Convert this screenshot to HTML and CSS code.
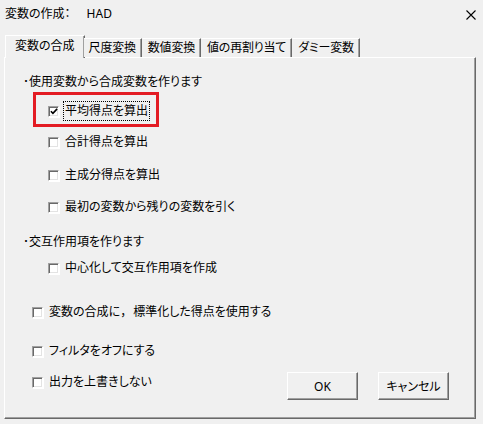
FILE: index.html
```html
<!DOCTYPE html>
<html lang="ja">
<head>
<meta charset="utf-8">
<title>変数の作成</title>
<link rel="stylesheet" href="styles.css">
</head>
<body>
<div class="window">
  <div class="titlebar">
    <span class="title">変数の作成：<span class="title-name">HAD</span></span>
    <svg class="close" width="10" height="10" viewBox="0 0 10 10"><path d="M0.5 0.5 L9.5 9.5 M9.5 0.5 L0.5 9.5" stroke="#000" stroke-width="1.1" fill="none"/></svg>
  </div>
  <div class="tabs">
    <div class="tab active">変数の合成</div>
    <div class="tab">尺度変換</div>
    <div class="tab">数値変換</div>
    <div class="tab">値の再割り当て</div>
    <div class="tab">ダミー変数</div>
  </div>
  <div class="panel">
    <div class="heading h1">･使用変数から合成変数を作ります</div>
    <div class="highlight">
      <div class="row">
        <span class="cb checked"><svg width="9" height="9" viewBox="0 0 9 9"><path d="M1 4.2 L3.3 6.6 L8 1.6" stroke="#000" stroke-width="1.8" fill="none"/></svg></span>
        <span class="label focus">平均得点を算出</span>
      </div>
    </div>
    <div class="row lv2 r2"><span class="cb"></span><span class="label">合計得点を算出</span></div>
    <div class="row lv2 r3"><span class="cb"></span><span class="label">主成分得点を算出</span></div>
    <div class="row lv2 r4"><span class="cb"></span><span class="label">最初の変数から残りの変数を引く</span></div>
    <div class="heading h2">･交互作用項を作ります</div>
    <div class="row lv2 r5"><span class="cb"></span><span class="label">中心化して交互作用項を作成</span></div>
    <div class="row lv1 r6"><span class="cb"></span><span class="label">変数の合成に<span class="fw">，</span>標準化した得点を使用する</span></div>
    <div class="row lv1 r7"><span class="cb"></span><span class="label">フィルタをオフにする</span></div>
    <div class="bottom">
      <div class="row lv1"><span class="cb"></span><span class="label">出力を上書きしない</span></div>
      <div class="buttons">
        <button class="btn">OK</button>
        <button class="btn">キャンセル</button>
      </div>
    </div>
  </div>
</div>
</body>
</html>
```
FILE: styles.css
```css
* { box-sizing: border-box; }
html, body { margin: 0; padding: 0; }
body {
  background: #f0f0f0;
  font-family: "Noto Sans", "Noto Sans CJK JP", sans-serif;
  font-size: 12px;
  color: #000;
  font-feature-settings: "palt";
  width: 483px;
  height: 424px;
  overflow: hidden;
}
.window { width: 483px; height: 424px; display: flex; flex-direction: column; }
.titlebar {
  height: 27px;
  display: flex;
  align-items: center;
  justify-content: space-between;
  padding: 0 7px 0 5px;
}
.title { line-height: 16px; }
.title-name { margin-left: 16px; }
.close { margin-top: 2px; }
.tabs {
  display: flex;
  align-items: flex-end;
  height: 23px;
  margin-top: 8px;
  margin-left: 5px;
  position: relative;
  z-index: 1;
}
.tab {
  height: 19px;
  line-height: 17px;
  padding: 0 5px;
  background: #f0f0f0;
  border-top: 1px solid #fff;
  border-left: 1px solid #fff;
  border-right: 1px solid #696969;
  box-shadow: inset -1px 0 0 #a0a0a0;
  margin-bottom: 1px;
  white-space: nowrap;
  letter-spacing: -0.2px;
}
.tab.active {
  height: 23px;
  line-height: 20px;
  padding: 0 9px;
  margin-bottom: 0;
  margin-right: -1px;
  letter-spacing: 0;
}
.tab + .tab { border-left-color: transparent; }
.tab.active + .tab { border-left: none; }
.panel {
  margin: -1px 7px 5px 4px;
  flex: 1;
  border-top: 1px solid #fff;
  border-left: 1px solid #fff;
  border-right: 1px solid #696969;
  border-bottom: 1px solid #696969;
  box-shadow: inset -1px -1px 0 #a0a0a0;
  display: flex;
  flex-direction: column;
  align-items: flex-start;
}
.heading { height: 20px; line-height: 20px; margin-left: 18px; }
.h1 { margin-top: 14px; }
.h2 { margin-top: 15px; }
.row {
  height: 20px;
  display: flex;
  align-items: center;
  gap: 6px;
}
.lv1 { margin-left: 27px; }
.lv2 { margin-left: 43px; }
.r2 { margin-top: 5px; }
.r3 { margin-top: 13px; }
.r4 { margin-top: 12px; }
.r5 { margin-top: 6px; }
.r6 { margin-top: 24px; }
.r7 { margin-top: 19px; }
.label { line-height: 16px; white-space: nowrap; }
.label .fw { font-feature-settings: normal; margin-right: 1px; }
.label.focus { outline: 1px dotted #000; outline-offset: 1px; }
.cb {
  width: 11px;
  height: 11px;
  flex: none;
  background: #fff;
  border-top: 1px solid #a0a0a0;
  border-left: 1px solid #a0a0a0;
  border-right: 1px solid #fff;
  border-bottom: 1px solid #fff;
  box-shadow: inset 1px 1px 0 #696969, inset -1px -1px 0 #e3e3e3, 1px 1px 0 #fff;
  display: flex;
  align-items: center;
  justify-content: center;
}
.cb svg { display: block; margin: 1px 0 0 1px; }
.highlight {
  margin-left: 28px;
  border: 3px solid #e31b23;
  padding: 6px 8px 3px 12px;
}
.bottom {
  margin-top: 11px;
  align-self: stretch;
  display: flex;
  justify-content: space-between;
  align-items: flex-start;
}
.buttons { display: flex; gap: 20px; margin-right: 26px; }
.btn {
  width: 71px;
  height: 28px;
  font: inherit;
  font-feature-settings: "palt";
  color: #000;
  background: #f0f0f0;
  border-top: 1px solid #fff;
  border-left: 1px solid #fff;
  border-right: 1px solid #696969;
  border-bottom: 1px solid #696969;
  box-shadow: inset -1px -1px 0 #a0a0a0;
  padding: 0;
}
```
